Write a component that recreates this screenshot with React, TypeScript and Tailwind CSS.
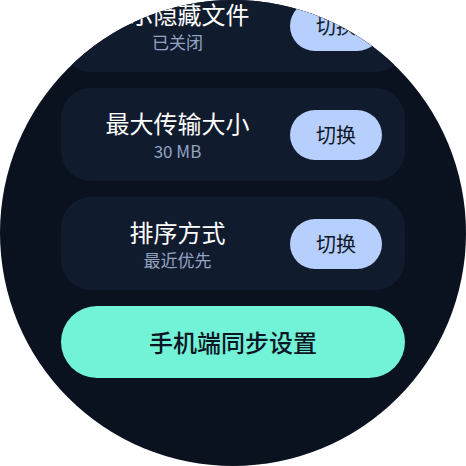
import React from "react"

const font = { fontFamily: '"Noto Sans CJK SC", "Noto Sans", sans-serif' }

interface SettingRowProps {
  title: string
  value: string
}

function SettingRow({ title, value }: SettingRowProps) {
  return (
    <div className="flex h-[93px] shrink-0 items-center gap-4 rounded-[30px] bg-[#111b2e] pl-5 pr-[23px]">
      <div className="flex flex-1 flex-col items-center gap-[2px]">
        <span className="whitespace-nowrap text-[24px] leading-[30px] text-white">{title}</span>
        <span className="whitespace-nowrap text-[17px] leading-[22px] text-[#93a4c2]">{value}</span>
      </div>
      <button className="h-[50px] w-[92px] shrink-0 rounded-full bg-[#b6cffc] text-[20px] text-[#0f1829]">
        切换
      </button>
    </div>
  )
}

export default function App() {
  const rows = [
    { title: "显示隐藏文件", value: "已关闭" },
    { title: "最大传输大小", value: "30 MB" },
    { title: "排序方式", value: "最近优先" },
  ]

  return (
    <div className="h-[466px] w-[466px] bg-white" style={font}>
      <div className="h-[466px] w-[466px] overflow-hidden rounded-full bg-[#0a111f]">
        <div className="-mt-[21px] flex flex-col gap-4 px-[61px]">
          {rows.map((row) => (
            <SettingRow key={row.title} title={row.title} value={row.value} />
          ))}
          <button className="h-[72px] shrink-0 rounded-full bg-[#72f2d6] text-[24px] font-medium text-[#0c1524]">
            手机端同步设置
          </button>
        </div>
      </div>
    </div>
  )
}
